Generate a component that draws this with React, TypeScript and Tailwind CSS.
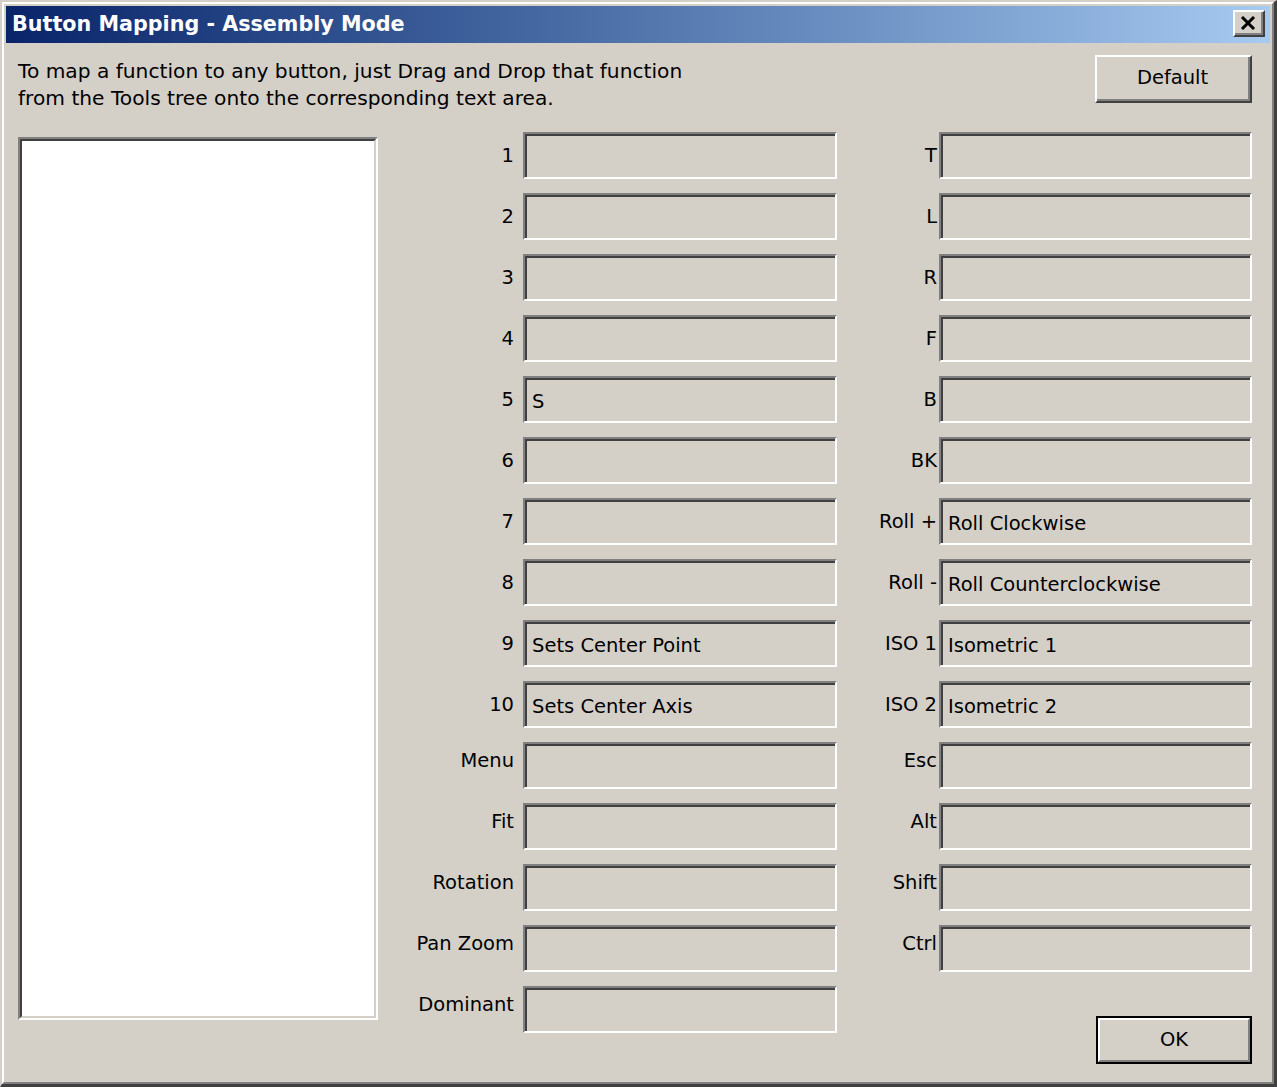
import React from 'react';

interface Row {
  label: string;
  value?: string;
  up?: boolean;
}

const leftRows: Row[] = [
  { label: '1' },
  { label: '2' },
  { label: '3' },
  { label: '4' },
  { label: '5', value: 'S' },
  { label: '6' },
  { label: '7' },
  { label: '8' },
  { label: '9', value: 'Sets Center Point' },
  { label: '10', value: 'Sets Center Axis' },
  { label: 'Menu', up: true },
  { label: 'Fit', up: true },
  { label: 'Rotation', up: true },
  { label: 'Pan Zoom', up: true },
  { label: 'Dominant', up: true },
];

const rightRows: Row[] = [
  { label: 'T' },
  { label: 'L' },
  { label: 'R' },
  { label: 'F' },
  { label: 'B' },
  { label: 'BK' },
  { label: 'Roll +', value: 'Roll Clockwise' },
  { label: 'Roll -', value: 'Roll Counterclockwise' },
  { label: 'ISO 1', value: 'Isometric 1' },
  { label: 'ISO 2', value: 'Isometric 2' },
  { label: 'Esc', up: true },
  { label: 'Alt', up: true },
  { label: 'Shift', up: true },
  { label: 'Ctrl', up: true },
];

// classic sunken edit box
function Field({ value, width }: { value?: string; width: string }) {
  return (
    <div className={`${width} h-[47px] border-2 border-t-[#808080] border-l-[#808080] border-r-white border-b-white`}>
      <div className="h-full border-t-2 border-l-2 border-t-[#404040] border-l-[#404040] flex items-center pl-[5px] pt-[2px] bg-[#d4d0c8]">
        {value}
      </div>
    </div>
  );
}

function Button({ label, isDefault }: { label: string; isDefault?: boolean }) {
  const inner = (
    <div className="h-full border-2 border-t-white border-l-white border-r-[#808080] border-b-[#808080] flex items-center justify-center">
      {label}
    </div>
  );
  if (isDefault) {
    return <div className="w-[156px] h-[48px] border-2 border-black">{inner}</div>;
  }
  return (
    <div className="w-[157px] h-[48px] border-t-2 border-l-2 border-r-2 border-b-2 border-t-white border-l-white border-r-[#404040] border-b-[#404040]">
      <div className="h-full border-r-2 border-b-2 border-r-[#808080] border-b-[#808080] flex items-center justify-center">
        {label}
      </div>
    </div>
  );
}

export default function App() {
  return (
    <div className="w-[1277px] h-[1087px] bg-[#d4d0c8] border-t-2 border-l-2 border-r-[3px] border-b-[3px] border-t-[#d4d0c8] border-l-[#d4d0c8] border-r-[#404040] border-b-[#404040] font-['DejaVu_Sans',sans-serif] text-[19.5px] text-black">
      <div className="h-full border-2 border-t-white border-l-white border-r-[#808080] border-b-[#808080] p-[2px] flex flex-col">

        {/* TITLE BAR */}
        <div className="h-[37px] shrink-0 flex items-center justify-between pl-[6px] pr-[5px] bg-gradient-to-r from-[#0a246a] to-[#a6caf0]">
          <span className="text-white font-bold text-[20.7px] leading-none">Button Mapping - Assembly Mode</span>
          <div className="w-[32px] h-[27px] mb-[2px] border-2 border-t-white border-l-white border-r-[#404040] border-b-[#404040] bg-[#d4d0c8]">
            <div className="h-full border-r-2 border-b-2 border-r-[#808080] border-b-[#808080] flex items-center justify-center">
              <svg width="16" height="14" viewBox="0 0 16 14">
                <path d="M2 1 L14 13 M14 1 L2 13" stroke="#000" strokeWidth="3" fill="none" />
              </svg>
            </div>
          </div>
        </div>

        {/* HEADER */}
        <div className="h-[89px] shrink-0 flex items-start justify-between pl-[12px] pr-[18px]">
          <p className="pt-[15px] leading-[27px] text-[20.2px]">
            To map a function to any button, just Drag and Drop that function
            <br />
            from the Tools tree onto the corresponding text area.
          </p>
          <div className="mt-[12px]">
            <Button label="Default" />
          </div>
        </div>

        {/* MAIN */}
        <div className="flex items-start pl-[12px]">
          <div className="w-[360px] h-[883px] mt-[5px] border-2 border-t-[#808080] border-l-[#808080] border-r-white border-b-white">
            <div className="h-full border-t-2 border-l-2 border-t-[#404040] border-l-[#404040] border-r-2 border-b-2 border-r-[#d4d0c8] border-b-[#d4d0c8] bg-white" />
          </div>

          <div className="flex flex-col gap-[14px]">
            {leftRows.map((row) => (
              <div key={row.label} className="flex items-center">
                <span className={`w-[136px] text-right ${row.up ? 'pb-[10px]' : ''}`}>{row.label}</span>
                <div className="ml-[9px]">
                  <Field value={row.value} width="w-[314px]" />
                </div>
              </div>
            ))}
          </div>

          <div className="flex flex-col gap-[14px]">
            {rightRows.map((row) => (
              <div key={row.label} className="flex items-center">
                <span className={`w-[100px] text-right whitespace-nowrap ${row.up ? 'pb-[10px]' : ''}`}>{row.label}</span>
                <div className="ml-[2px]">
                  <Field value={row.value} width="w-[313px]" />
                </div>
              </div>
            ))}
            <div className="self-end mt-[30px]">
              <Button label="OK" isDefault />
            </div>
          </div>
        </div>
      </div>
    </div>
  );
}
